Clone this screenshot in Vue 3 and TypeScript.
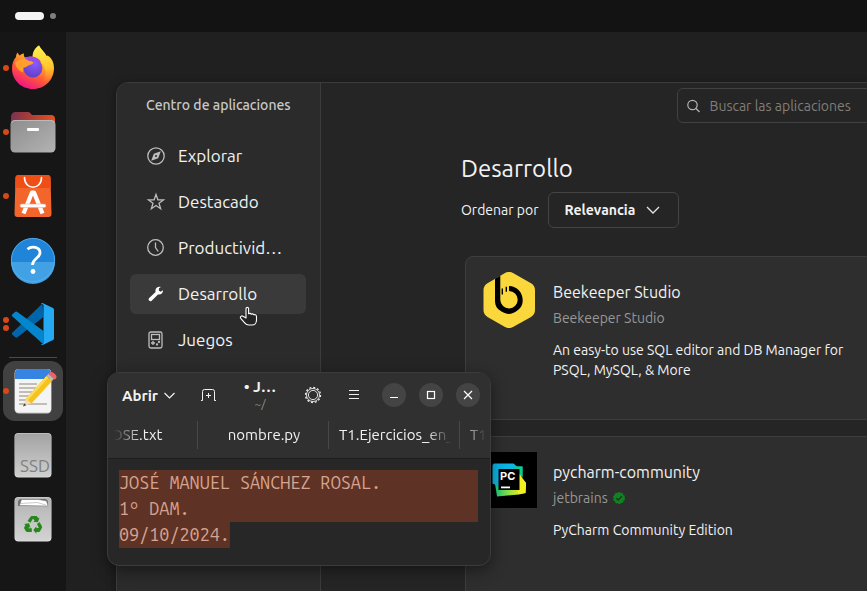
<script setup lang="ts">
import { ref } from 'vue'

interface DockItem {
  id: string
  label: string
  dots: number
  active?: boolean
}

interface Category {
  id: string
  label: string
}

interface AppEntry {
  id: string
  name: string
  publisher: string
  verified: boolean
  description: string
}

const pinned: DockItem[] = [
  { id: 'firefox', label: 'Firefox', dots: 1 },
  { id: 'files', label: 'Archivos', dots: 1 },
  { id: 'store', label: 'Centro de aplicaciones', dots: 1 },
  { id: 'help', label: 'Ayuda', dots: 0 },
  { id: 'code', label: 'Visual Studio Code', dots: 2 },
]

const running: DockItem[] = [
  { id: 'editor', label: 'Editor de texto', dots: 1, active: true },
  { id: 'ssd', label: 'SSD', dots: 0 },
  { id: 'trash', label: 'Papelera', dots: 0 },
]

const groups = [pinned, running]

const categories: Category[] = [
  { id: 'explore', label: 'Explorar' },
  { id: 'featured', label: 'Destacado' },
  { id: 'productivity', label: 'Productivid…' },
  { id: 'development', label: 'Desarrollo' },
  { id: 'games', label: 'Juegos' },
]

const apps: AppEntry[] = [
  {
    id: 'beekeeper',
    name: 'Beekeeper Studio',
    publisher: 'Beekeeper Studio',
    verified: false,
    description: 'An easy-to use SQL editor and DB Manager for PSQL, MySQL, & More',
  },
  {
    id: 'pycharm',
    name: 'pycharm-community',
    publisher: 'jetbrains',
    verified: true,
    description: 'PyCharm Community Edition',
  },
]

const tabs = ['JOSE.txt', 'nombre.py', 'T1.Ejercicios_en_', 'T1']

const selected = ref('development')
const query = ref('')
const sort = ref('Relevancia')
const content = ref('JOSÉ MANUEL SÁNCHEZ ROSAL.\n1º DAM.\n09/10/2024.')
</script>

<template>
  <div class="desktop">
    <header class="topbar">
      <span class="workspace current"></span>
      <span class="workspace"></span>
    </header>

    <div class="main">
      <nav class="dock" aria-label="Dock">
        <div v-for="(group, g) in groups" :key="g" class="dock-group">
          <button
            v-for="item in group"
            :key="item.id"
            type="button"
            class="dock-item"
            :class="{ active: item.active }"
            :aria-label="item.label"
          >
            <span v-if="item.dots" class="dots">
              <i v-for="n in item.dots" :key="n"></i>
            </span>

            <svg v-if="item.id === 'firefox'" width="48" height="48" viewBox="0 0 48 48" aria-hidden="true">
              <defs>
                <linearGradient id="fx-body" x1="0.8" y1="0.05" x2="0.3" y2="1">
                  <stop offset="0" stop-color="#fff04a" />
                  <stop offset="0.35" stop-color="#ffb02a" />
                  <stop offset="0.65" stop-color="#ff5a36" />
                  <stop offset="1" stop-color="#f0108a" />
                </linearGradient>
                <linearGradient id="fx-flame" x1="0.5" y1="0" x2="0.6" y2="1">
                  <stop offset="0" stop-color="#fff150" />
                  <stop offset="0.6" stop-color="#ffc62c" />
                  <stop offset="1" stop-color="#ff8a2a" stop-opacity="0" />
                </linearGradient>
                <radialGradient id="fx-globe" cx="0.6" cy="0.25" r="0.8">
                  <stop offset="0" stop-color="#9059ff" />
                  <stop offset="1" stop-color="#5b3fc4" />
                </radialGradient>
              </defs>
              <path d="M30 1.500c2 4 5.500 6 7 11l1.500-1C43 14 45 19 45 24c0 12-9.300 21-21 21S3 36 3 24.500c0-5 1.500-8.500 4-11.500 0-2 .5-3 1.800-4.500.5 1.500 1 2.200 2 3 1-1 2.300-1.800 4.200-2-.5 1.800 0 3 1 4 2-.8 5-1 7.500-.5C23.300 8.500 26 4 30 1.500z" fill="url(#fx-body)" />
              <path d="M30 1.500c2 4 5.500 6 8 11 1.500 1 2.500 2 2.800 3.500C44 18 45 23 43.500 29c-2 6-6 9-10 10 4-6 4-14 0-19-2-3-6-5-9.500-6C23.500 8.500 26 4 30 1.500z" fill="url(#fx-flame)" />
              <circle cx="24" cy="24" r="9.400" fill="url(#fx-globe)" />
              <path d="M6 18.500c3-3.500 8-4.500 12-3.500l5 2.500c1.500.5 2 1 1.200 1.800-1.500 1.800-4 1.200-5.700 2.700-1.200 1-2.500 1.500-4 1.500-1 2-.5 4 0 5-4-1-8-5-8.500-10z" fill="#ff9d2d" />
              <path d="M16 14.500c4-3 10-2.500 13.500.5 1 .8 2 2 2.500 3.500-1-.8-2-1-3-1-3-2.500-6-2-8.500-.3z" fill="#a24be8" />
            </svg>

            <svg v-else-if="item.id === 'files'" width="48" height="48" viewBox="0 0 48 48" aria-hidden="true">
              <defs>
                <linearGradient id="fl-back" x1="0" y1="0" x2="1" y2="0.2">
                  <stop offset="0" stop-color="#77304f" />
                  <stop offset="1" stop-color="#e6501f" />
                </linearGradient>
                <linearGradient id="fl-front" x1="0" y1="0" x2="1" y2="1">
                  <stop offset="0" stop-color="#8d8d8d" />
                  <stop offset="1" stop-color="#b3b3b3" />
                </linearGradient>
              </defs>
              <path d="M2 8.500A4.500 4.500 0 0 1 6.500 4h12c1.500 0 2.300.5 3.200 1.500L23 7h19a4 4 0 0 1 4 4v12H2z" fill="url(#fl-back)" />
              <rect x="1.500" y="12" width="45" height="32.500" rx="4.500" fill="url(#fl-front)" />
              <path d="M2.500 15a3.500 3.500 0 0 1 3.500-2.500h36a3.500 3.500 0 0 1 3.500 2.500" fill="none" stroke="#b9b9b9" />
              <rect x="18" y="20" width="12" height="3" rx="1" fill="#fff" />
            </svg>

            <svg v-else-if="item.id === 'store'" width="48" height="48" viewBox="0 0 48 48" aria-hidden="true">
              <path d="M9.500 3h29a3 3 0 0 1 3 2.800L42.500 42a3 3 0 0 1-3 3h-31a3 3 0 0 1-3-3L6.500 5.800A3 3 0 0 1 9.500 3z" fill="#f2662c" />
              <path d="M9.500 3h29a3 3 0 0 1 3 2.800l.4 10.200H6.200l.3-10.200A3 3 0 0 1 9.500 3z" fill="#ee4f16" />
              <path d="M15.500 5.500c0 13 17 13 17 0" fill="none" stroke="#fff" stroke-width="1.600" stroke-linecap="round" />
              <path d="M14.500 41.500 23 20.500h2L33.500 41.500" fill="none" stroke="#fff" stroke-width="4.200" stroke-linejoin="round" />
              <rect x="11" y="32" width="26" height="3.600" rx="1.800" fill="#fff" stroke="#f6a27f" stroke-width="0.600" />
            </svg>

            <svg v-else-if="item.id === 'help'" width="48" height="48" viewBox="0 0 48 48" aria-hidden="true">
              <circle cx="24" cy="24" r="22" fill="#2085d8" />
              <path d="M2 26a22 22 0 0 0 44 0z" fill="#41a1e4" />
              <circle cx="24" cy="24" r="21.600" fill="none" stroke="#5cb3ee" stroke-width="0.800" />
              <path d="M18.500 13.200c4-3.500 12.500-2.500 12.500 3.500 0 5.500-7.500 5.800-7.500 12.300" fill="none" stroke="#fff" stroke-width="2.800" />
              <circle cx="24" cy="35.500" r="2.400" fill="#fff" />
            </svg>

            <svg v-else-if="item.id === 'code'" width="48" height="48" viewBox="0 0 48 48" aria-hidden="true">
              <path d="M33.500 3.500 3.500 32.500c-.8.800-.8 1.600 0 2.300l2.700 2.500c.8.600 1.500.5 2.300 0L34.500 17z" fill="#0065a9" />
              <path d="M34.500 44.500 3.500 16.500c-.8-.8-.8-1.600 0-2.300L6 12c.8-.7 1.600-.7 2.400 0l26.100 19z" fill="#0486cf" />
              <path d="M34 3.200 44 8c.8.500 1 1 1 1.800v28.600c0 .8-.4 1.300-1 1.600L34.200 44.800c-1 .4-1.800.1-2.700-.8 1.500.8 3 0 3-1.600V5.800c0-1.800-1.500-2.600-3-1.600.8-1 1.600-1.400 2.500-1z" fill="#24a9f2" />
            </svg>

            <svg v-else-if="item.id === 'editor'" width="48" height="48" viewBox="0 0 48 48" aria-hidden="true">
              <defs>
                <clipPath id="ed-page"><rect x="6" y="2" width="36" height="43.500" rx="4" /></clipPath>
              </defs>
              <rect x="5.500" y="2" width="37" height="44.500" rx="4.500" fill="#c9c9c9" />
              <g clip-path="url(#ed-page)">
                <rect x="6" y="2" width="36" height="44" fill="#f4f4f4" />
                <rect x="6" y="2" width="36" height="10" fill="#3584e4" />
              </g>
              <g fill="#c2beb4">
                <rect x="10" y="16" width="18" height="2" />
                <rect x="10" y="20" width="18" height="2" />
                <rect x="10" y="24" width="18" height="2" />
                <rect x="10" y="28" width="14" height="2" />
                <rect x="10" y="32" width="10" height="2" />
                <rect x="10" y="36" width="28" height="2" />
              </g>
              <path d="m14 39.500 3.500-8.500 5 5z" fill="#f3dcb4" />
              <path d="m14 39.500 1.300-3.200 2 2z" fill="#444" />
              <path d="M17 31.500 37.500 9l5.500 5-20.500 22.500z" fill="#f8c21c" />
              <path d="M17 31.500 37.500 9l1.800 1.700-20.500 22.500z" fill="#fbdc5a" />
              <path d="m37.500 9 2.200-2.400 5.500 5L43 14z" fill="#b9b9b9" />
              <path d="m39.300 7 .8-.9c1.700-1.700 3.600-1 5.500.700 2.200 2 2.500 3.500 1 5.200l-1 .500z" fill="#ee6165" />
            </svg>

            <svg v-else-if="item.id === 'ssd'" width="48" height="48" viewBox="0 0 48 48" aria-hidden="true">
              <defs>
                <linearGradient id="sd" x1="0" y1="0" x2="0" y2="1">
                  <stop offset="0" stop-color="#a3a3a3" />
                  <stop offset="1" stop-color="#cfcfcf" />
                </linearGradient>
              </defs>
              <rect x="5.500" y="2" width="37" height="44.500" rx="4" fill="#d8d8d8" />
              <rect x="6" y="2.500" width="36" height="43" rx="4" fill="url(#sd)" />
              <text x="26" y="41" text-anchor="middle" class="ssd-text">SSD</text>
            </svg>

            <svg v-else width="48" height="48" viewBox="0 0 48 48" aria-hidden="true">
              <defs>
                <linearGradient id="tr" x1="0" y1="0" x2="0" y2="1">
                  <stop offset="0" stop-color="#b3b3b3" />
                  <stop offset="1" stop-color="#d3d3d3" />
                </linearGradient>
              </defs>
              <rect x="5.500" y="2" width="37" height="44.500" rx="4" fill="#dedede" />
              <rect x="6" y="2.500" width="36" height="43" rx="4" fill="url(#tr)" />
              <path d="M9 7a3.500 3.500 0 0 1 3.500-3h23A3.500 3.500 0 0 1 39 7v4H9z" fill="#6f6f6f" />
              <path d="m10.500 10.500 2-6h17l8 1.500 1.500 5z" fill="#fff" stroke="#777" stroke-width="0.500" />
              <path d="m11 8.500 17-1 9 2.500" fill="none" stroke="#999" stroke-width="0.500" />
              <g fill="#26871b">
                <path d="m18.500 26 3-4.200c.4-.5.8-.8 1.500-.8h4c.7 0 1.200.3 1.500.9l.8 1.300 1.300-.7-1.700 4.800-4.700-.6 1.400-1-1.600-2.200-2.500 4.200z" />
                <path d="m30.500 27 2.300 4c.4.700.4 1.200 0 1.900L31.200 36c-.4.700-.8 1-1.600 1h-2.200v1.700L24.300 35l3.100-3.800v1.900h2.400L28 29z" />
                <path d="M22.800 33.300V37h-4.600c-.7 0-1.200-.3-1.500-.9l-1.300-2.300c-.4-.7-.4-1.200 0-1.900l1.100-1.900-1.500-.9 5-.8 1.600 4.600-1.500-.8-.7 1.200z" />
              </g>
            </svg>
          </button>
        </div>
      </nav>

      <main class="area">
        <section class="window store">
          <aside class="sidebar">
            <h2 class="sidebar-title">Centro de aplicaciones</h2>
            <nav class="categories" aria-label="Categorías">
              <button
                v-for="cat in categories"
                :key="cat.id"
                type="button"
                class="category"
                :class="{ selected: cat.id === selected }"
                @click="selected = cat.id"
              >
                <svg width="20" height="20" viewBox="0 0 20 20" fill="none" stroke="currentColor" stroke-width="1.300" aria-hidden="true">
                  <template v-if="cat.id === 'explore'">
                    <circle cx="10" cy="10" r="8.200" />
                    <path d="m14.800 5.200-2.600 7-7 2.600 2.600-7z" fill="currentColor" stroke="none" />
                    <circle cx="10" cy="10" r="1" fill="#2b2b2b" stroke="none" />
                  </template>
                  <path v-else-if="cat.id === 'featured'" d="m10 2.500 1.900 5.300 5.600.1-4.500 3.400 1.600 5.400-4.600-3.200-4.600 3.200L7 11.300 2.500 7.900l5.600-.1z" />
                  <template v-else-if="cat.id === 'productivity'">
                    <circle cx="9.500" cy="9.500" r="7.800" />
                    <path d="M9.500 4.500v5l2.800 4" />
                  </template>
                  <path
                    v-else-if="cat.id === 'development'"
                    d="M17 6.200 14.500 7.800l-1.700-1.300.2-2.300 1.800-1.200c-2.300-.6-4.700.4-5.300 2.700-.2.900-.1 1.700.1 2.400l-6.400 6c-1.700 1.700.6 4.200 2.500 2.600l6.300-6.300c2.500.6 5.200-1.200 5-4.200z"
                    fill="#fff"
                    stroke="none"
                  />
                  <template v-else>
                    <rect x="3" y="2" width="13" height="16" rx="1.800" />
                    <rect x="5.500" y="4.500" width="8" height="5" />
                    <path d="M7 11v4M5 13h4" />
                    <circle cx="13" cy="12" r="0.500" />
                    <circle cx="11" cy="14.500" r="0.500" />
                  </template>
                </svg>
                <span>{{ cat.label }}</span>
              </button>
            </nav>
          </aside>

          <div class="content">
            <div class="content-header">
              <label class="search">
                <svg width="16" height="16" viewBox="0 0 16 16" fill="none" stroke="#b4b4b4" stroke-width="1.200" aria-hidden="true">
                  <circle cx="6.500" cy="7" r="4.700" />
                  <path d="m10 10.500 3.500 3.500" />
                </svg>
                <input v-model="query" type="search" placeholder="Buscar las aplicaciones" aria-label="Buscar las aplicaciones" />
              </label>
            </div>

            <h1 class="title">Desarrollo</h1>
            <div class="sort">
              <label for="sort">Ordenar por</label>
              <div class="select">
                <select id="sort" v-model="sort">
                  <option>Relevancia</option>
                  <option>Nombre</option>
                </select>
                <svg width="14" height="8" viewBox="0 0 14 8" fill="none" stroke="#e6e6e6" stroke-width="1.300" aria-hidden="true">
                  <path d="m1 1 6 6 6-6" />
                </svg>
              </div>
            </div>

            <div class="cards">
              <article v-for="app in apps" :key="app.id" class="card">
                <svg v-if="app.id === 'beekeeper'" class="logo" width="56" height="56" viewBox="0 0 56 56" aria-hidden="true">
                  <path d="M24 1.100a8 8 0 0 1 8 0l18 10.200a8 8 0 0 1 4 7V38a8 8 0 0 1-4 7L32 55a8 8 0 0 1-8 0L6.500 45a8 8 0 0 1-4-7V18.300a8 8 0 0 1 4-7z" fill="#fad83b" />
                  <path d="m14 6.800 5.300-3V28a8.700 8.700 0 1 0 8.700-9v-5c8 0 13.700 6.500 13.700 14 0 5-1.700 8.200-6.700 11.500-5 3.300-9 3.300-14.500 0C15.500 36.500 14 33.500 14 28z" fill="#000" />
                  <path d="M21.300 16.500v6M25.300 14.700v5" stroke="#000" stroke-width="1.400" fill="none" />
                </svg>
                <svg v-else class="logo" width="56" height="56" viewBox="0 0 56 56" aria-hidden="true">
                  <defs>
                    <linearGradient id="pc-a" x1="0" y1="0" x2="1" y2="1">
                      <stop offset="0" stop-color="#07b4f0" />
                      <stop offset="0.500" stop-color="#10b8d8" />
                      <stop offset="1" stop-color="#21d789" />
                    </linearGradient>
                    <linearGradient id="pc-b" x1="0" y1="0" x2="1" y2="0">
                      <stop offset="0" stop-color="#13cf80" />
                      <stop offset="0.600" stop-color="#b8e62e" />
                      <stop offset="1" stop-color="#fcf51e" />
                    </linearGradient>
                  </defs>
                  <rect width="56" height="56" fill="#000" />
                  <path d="M38 24 45 31l-.5 10-6.500 1.500L16 44.500 14 32z" fill="url(#pc-b)" />
                  <path d="M13 11.500h19.500l3.500 3h5.500V24L20 38l-5-5-3.500-1.500V13z" fill="url(#pc-a)" />
                  <path d="m37 20 8 11-.5 10-7.500 1z" fill="#f4f01f" />
                  <path d="M33 14.500h8.500V26L38 20z" fill="#0fce86" />
                  <rect x="17.500" y="17" width="21" height="21" fill="#000" />
                  <text x="19" y="28" class="pc-text">PC</text>
                  <rect x="20" y="34.500" width="9" height="1.800" fill="#fff" />
                </svg>
                <div class="info">
                  <h3>{{ app.name }}</h3>
                  <p class="publisher">
                    <span>{{ app.publisher }}</span>
                    <svg v-if="app.verified" width="14" height="14" viewBox="0 0 14 14" aria-label="Verificado" role="img">
                      <circle cx="7" cy="7" r="5.300" fill="#0e8420" stroke="#0e8420" stroke-width="1.300" stroke-dasharray="2.200 1.100" />
                      <path d="m4.300 7.200 1.900 1.900 3.600-3.900" fill="none" stroke="#2b2b2b" stroke-width="1.400" />
                    </svg>
                  </p>
                  <p class="description">{{ app.description }}</p>
                </div>
              </article>
            </div>
          </div>
        </section>

        <svg class="pointer" width="20" height="22" viewBox="0 0 20 22" aria-hidden="true">
          <path d="M7 12V2.800c0-1.900 2.600-1.900 2.600 0v5c.8-.7 2-.5 2.600.4.900-.6 2-.4 2.600.6 1.500-.6 2.700.3 2.700 1.900v3.500c0 2.500-1.800 4.800-4.500 4.800h-3c-2 0-3.200-.7-4.300-2.200l-4-4.500c-1-1.600.8-3 2.300-2z" fill="#242424" stroke="#fff" stroke-width="1.100" stroke-linejoin="round" />
        </svg>

        <section class="window editor">
          <header class="editor-header">
            <button type="button" class="plain open">
              Abrir
              <svg width="11" height="7" viewBox="0 0 11 7" fill="none" stroke="currentColor" stroke-width="1.200" aria-hidden="true">
                <path d="m.5 1 5 5 5-5" />
              </svg>
            </button>
            <button type="button" class="plain" aria-label="Pestaña nueva">
              <svg width="15" height="14" viewBox="0 0 15 14" fill="none" stroke="currentColor" aria-hidden="true">
                <path d="M0 12.500h1.500v-9a2 2 0 0 1 2-2h8a2 2 0 0 1 2 2v9H15M7.500 5v5M5 7.500h5" />
              </svg>
            </button>
            <div class="doc-title">
              <strong>• J…</strong>
              <small>~/</small>
            </div>
            <button type="button" class="plain" aria-label="Preferencias">
              <svg width="18" height="18" viewBox="0 0 18 18" fill="none" stroke="currentColor" aria-hidden="true">
                <circle cx="9" cy="9" r="7.500" stroke-width="1.300" stroke-dasharray="2 1.927" />
                <circle cx="9" cy="9" r="6.500" stroke-width="0.900" />
                <circle cx="9" cy="9" r="4.600" stroke-width="0.900" />
              </svg>
            </button>
            <button type="button" class="plain" aria-label="Menú">
              <svg width="12" height="12" viewBox="0 0 12 12" stroke="currentColor" aria-hidden="true">
                <path d="M1 1.500h10M1 5.500h10M1 9.500h10" />
              </svg>
            </button>
            <div class="controls">
              <button type="button" aria-label="Minimizar">
                <svg width="10" height="10" viewBox="0 0 10 10" aria-hidden="true"><path d="M1 7.500h8" /></svg>
              </button>
              <button type="button" aria-label="Maximizar">
                <svg width="10" height="10" viewBox="0 0 10 10" aria-hidden="true"><rect x="1.500" y="1.500" width="7" height="7" /></svg>
              </button>
              <button type="button" aria-label="Cerrar">
                <svg width="10" height="10" viewBox="0 0 10 10" aria-hidden="true"><path d="m1 1 8 8M9 1 1 9" /></svg>
              </button>
            </div>
          </header>
          <div class="tabs" role="tablist">
            <div class="tab-strip">
              <button v-for="tab in tabs" :key="tab" type="button" role="tab" class="tab">
                <span>{{ tab }}</span>
              </button>
            </div>
          </div>
          <textarea v-model="content" class="text" rows="3" spellcheck="false" aria-label="Documento"></textarea>
        </section>
      </main>
    </div>
  </div>
</template>

<style>
body {
  background: #202020;
}
</style>

<style scoped>
.desktop {
  display: flex;
  flex-direction: column;
  height: 100vh;
  overflow: hidden;
  background: #202020;
  color: #f2f2f2;
  font-family: Ubuntu, "Noto Sans", "Open Sans", sans-serif;
  font-size: 14px;
}

.desktop *,
.desktop *::before {
  box-sizing: border-box;
}

button,
select,
input,
textarea {
  font: inherit;
  color: inherit;
  border: 0;
  background: none;
  padding: 0;
  outline: 0;
}

h1,
h2,
h3,
p {
  margin: 0;
}

svg {
  display: block;
  flex: none;
}

.topbar {
  display: flex;
  align-items: center;
  gap: 6px;
  flex: none;
  height: 32px;
  padding: 0 15px;
  background: #131313;
}

.workspace {
  width: 6px;
  height: 6px;
  border-radius: 4px;
  background: #7f7f7f;
}

.workspace.current {
  width: 29px;
  height: 8px;
  background: #f4f4f4;
}

.main {
  display: flex;
  flex: 1;
  min-height: 0;
}

.dock {
  flex: none;
  width: 66px;
  padding-top: 6px;
  background: #161616;
}

.dock-group {
  display: flex;
  flex-direction: column;
  align-items: center;
  gap: 4px;
}

.dock-group + .dock-group::before {
  content: "";
  width: 48px;
  height: 1px;
  margin-top: 3px;
  margin-bottom: -1px;
  background: #4a4a4a;
}

.dock-item {
  position: relative;
  display: grid;
  place-items: center;
  width: 60px;
  height: 60px;
  border-radius: 12px;
}

.dock-item.active {
  background: #414141;
}

.dots {
  position: absolute;
  left: 0;
  top: 0;
  bottom: 0;
  display: flex;
  flex-direction: column;
  justify-content: center;
  gap: 2px;
}

.dots i {
  width: 6px;
  height: 6px;
  border-radius: 50%;
  background: #d5481a;
}

.ssd-text {
  font-family: Ubuntu, "Noto Sans", sans-serif;
  font-size: 17px;
  fill: #808080;
}

.pc-text {
  font-family: Inter, sans-serif;
  font-size: 11px;
  font-weight: 700;
  fill: #fff;
}

.area {
  position: relative;
  flex: 1;
  min-width: 0;
  overflow: hidden;
}

.window {
  position: absolute;
  overflow: hidden;
  border: 1px solid #3c3c3c;
  border-radius: 12px;
}

.store {
  left: 50px;
  top: 50px;
  right: -466px;
  bottom: -60px;
  display: flex;
  background: #252525;
  box-shadow: 0 2px 10px rgb(0 0 0 / 40%);
}

.sidebar {
  flex: none;
  width: 204px;
  padding: 0 14px 0 13px;
  border-right: 1px solid #3c3c3c;
  background: #2b2b2b;
}

.sidebar-title {
  height: 44px;
  padding-left: 16px;
  font-size: 14px;
  font-weight: 500;
  line-height: 44px;
  color: #c8c8c8;
  white-space: nowrap;
}

.categories {
  display: flex;
  flex-direction: column;
  gap: 6px;
  padding-top: 9px;
}

.category {
  display: flex;
  align-items: center;
  gap: 12px;
  height: 40px;
  padding: 0 16px;
  border-radius: 6px;
  font-size: 17px;
  line-height: 20px;
  text-align: left;
  white-space: nowrap;
}

.category svg {
  color: #bdbdbd;
}

.category.selected {
  background: #3a3a3a;
}

.content {
  flex: 1;
  min-width: 0;
}

.content-header {
  display: flex;
  align-items: center;
  justify-content: center;
  height: 45px;
}

.search {
  display: flex;
  align-items: center;
  gap: 8px;
  width: 300px;
  height: 35px;
  padding: 0 8px;
  border: 1px solid #414141;
  border-radius: 6px;
}

.search input {
  flex: 1;
  min-width: 0;
}

.search input::placeholder {
  color: #817d77;
}

.title {
  padding: 25px 140px 0;
  font-size: 24px;
  font-weight: 400;
  line-height: 32px;
}

.sort {
  display: flex;
  align-items: center;
  gap: 10px;
  padding: 7px 140px 0;
}

.select {
  display: grid;
  align-items: center;
}

.select select,
.select svg {
  grid-area: 1 / 1;
}

.select select {
  appearance: none;
  height: 36px;
  padding: 0 43px 0 15px;
  border: 1px solid #444;
  border-radius: 6px;
  font-weight: 600;
}

.select svg {
  justify-self: end;
  margin-right: 19px;
  pointer-events: none;
}

.cards {
  display: flex;
  flex-direction: column;
  gap: 16px;
  padding: 28px 144px;
}

.card {
  display: flex;
  gap: 16px;
  min-height: 164px;
  padding: 15px;
  border: 1px solid #3e3e3e;
  border-radius: 8px;
  background: #2e2e2e;
}

.info {
  max-width: 328px;
  padding-top: 8px;
}

.info h3 {
  font-size: 16px;
  font-weight: 400;
  line-height: 24px;
}

.publisher {
  display: flex;
  align-items: center;
  gap: 4px;
  padding-top: 4px;
  line-height: 20px;
  color: #979797;
}

.description {
  padding-top: 12px;
  line-height: 20px;
}

.pointer {
  position: absolute;
  left: 173px;
  top: 274px;
}

.editor {
  left: 41px;
  top: 340px;
  width: 384px;
  background: #272727;
  box-shadow: 0 4px 16px rgb(0 0 0 / 45%);
}

.editor-header {
  display: flex;
  align-items: center;
  gap: 18px;
  height: 44px;
  padding: 0 10px;
  background: #303030;
}

.plain {
  display: flex;
  align-items: center;
  padding: 0 4px;
}

.open {
  gap: 6px;
  font-size: 15px;
  font-weight: 700;
}

.doc-title {
  display: flex;
  flex: 1;
  flex-direction: column;
  align-items: center;
  white-space: nowrap;
}

.doc-title strong {
  font-size: 15px;
  line-height: 18px;
}

.doc-title small {
  font-size: 12px;
  line-height: 16px;
  color: #8d8d8d;
}

.controls {
  display: flex;
  gap: 13px;
}

.controls button {
  display: grid;
  place-items: center;
  width: 24px;
  height: 24px;
  border-radius: 50%;
  background: #444;
}

.controls svg {
  fill: none;
  stroke: #fff;
  stroke-width: 1.200;
}

.tabs {
  height: 42px;
  overflow: hidden;
  border-bottom: 1px solid #1e1e1e;
  background: #303030;
}

.tab-strip {
  display: flex;
  align-items: center;
  height: 36px;
  mask-image: linear-gradient(to right, transparent 6px, #000 34px, #000 354px, transparent 378px);
}

.tab {
  flex: none;
  width: 131px;
  height: 28px;
  padding: 0 8px 0 10px;
  border-right: 1px solid #484848;
  font-size: 15px;
  line-height: 20px;
}

.tab:first-child {
  margin-left: -41px;
}

.tab:last-child {
  text-align: left;
}

.tab span {
  display: block;
  white-space: nowrap;
  mask-image: linear-gradient(to left, transparent, #000 24px);
}

.text {
  display: block;
  width: 100%;
  height: 106px;
  padding: 11px 12px 17px 11px;
  overflow: hidden;
  resize: none;
  font-family: "Ubuntu Sans Mono", "Liberation Mono", monospace;
  font-size: 18px;
  line-height: 26px;
  color: #d8a391;
  background-image: linear-gradient(#5e3325, #5e3325), linear-gradient(#5e3325, #5e3325);
  background-origin: content-box;
  background-position: 0 0, 0 52px;
  background-size: 100% 52px, 11ch 26px;
  background-repeat: no-repeat;
}
</style>
